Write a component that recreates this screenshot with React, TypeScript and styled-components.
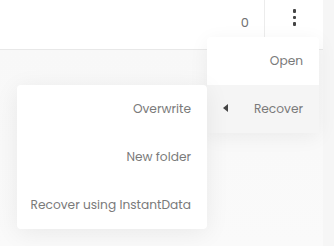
import styled, { createGlobalStyle } from "styled-components";

const GlobalStyle = createGlobalStyle`
    html, body, #root {
        height: 100%;
        margin: 0;
    }
    body {
        font-family: "Poppins", "Open Sans", "Noto Sans", sans-serif;
        background: #fafafa;
    }
`;

type MenuItemProps = {
    label: string;
    active?: boolean;
    hasSubmenu?: boolean;
    children?: React.ReactNode;
};

function MenuItem(props: MenuItemProps) {
    const { label, active, hasSubmenu, children } = props;
    return (
        <Item $active={active}>
            {hasSubmenu && <Caret />}
            <ItemLabel>{label}</ItemLabel>
            {children}
        </Item>
    );
}

function App() {
    return (
        <Page>
            <GlobalStyle />
            <Main>
                <TopBar>
                    <Spacer />
                    <CountCell>0</CountCell>
                    <ActionCell>
                        <Kebab>
                            <Dot />
                            <Dot />
                            <Dot />
                        </Kebab>
                        <Menu>
                            <MenuItem label="Open" />
                            <MenuItem label="Recover" active hasSubmenu>
                                <SubMenu>
                                    <MenuItem label="Overwrite" />
                                    <MenuItem label="New folder" />
                                    <MenuItem label="Recover using InstantData" />
                                </SubMenu>
                            </MenuItem>
                        </Menu>
                    </ActionCell>
                </TopBar>
                <Body />
            </Main>
            <Gutter />
        </Page>
    );
}

const Page = styled.div`
    display: flex;
    height: 100%;
`;

const Main = styled.div`
    flex: 1;
    display: flex;
    flex-direction: column;
`;

const Gutter = styled.div`
    width: 11px;
    background: #f6f6f6;
`;

const TopBar = styled.div`
    display: flex;
    height: 49px;
    background: #ffffff;
    border-bottom: 1px solid #e8e8e8;
`;

const Spacer = styled.div`
    flex: 1;
`;

const CountCell = styled.div`
    width: 44px;
    padding-right: 15px;
    display: flex;
    align-items: center;
    justify-content: flex-end;
    box-sizing: border-box;
    font-size: 13px;
    color: #707070;
    border-right: 1px solid #ececec;
    padding-bottom: 4px;
`;

const ActionCell = styled.div`
    position: relative;
    width: 58px;
    display: flex;
    justify-content: center;
    padding-top: 9px;
    box-sizing: border-box;
`;

const Kebab = styled.div`
    display: flex;
    flex-direction: column;
    gap: 3px;
    height: max-content;
    margin-left: 1px;
`;

const Dot = styled.span`
    width: 3.5px;
    height: 3.5px;
    border-radius: 1px;
    background: #444;
`;

const Body = styled.div`
    flex: 1;
    background: linear-gradient(180deg, #f8f8f8 0%, #fafafa 100%);
`;

const Menu = styled.ul`
    position: absolute;
    top: 37px;
    right: 4px;
    width: 112px;
    margin: 0;
    padding: 0;
    list-style: none;
    background: #ffffff;
    border-radius: 4px;
    box-shadow: 0 4px 20px rgba(0, 0, 0, 0.06);
    z-index: 2;
`;

const SubMenu = styled.ul`
    position: absolute;
    top: 0;
    right: 100%;
    width: 190px;
    margin: 0;
    padding: 0;
    list-style: none;
    background: #ffffff;
    border-radius: 4px;
    box-shadow: 0 4px 24px rgba(0, 0, 0, 0.07);
`;

const Item = styled.li<{ $active?: boolean }>`
    position: relative;
    height: 48px;
    display: flex;
    align-items: center;
    justify-content: flex-end;
    padding: 0 16px;
    font-size: 12.2px;
    color: #7a7a7a;
    background: ${(p) => (p.$active ? "#f5f5f5" : "transparent")};
`;

const ItemLabel = styled.span`
    white-space: nowrap;
`;

const Caret = styled.span`
    position: absolute;
    left: 16px;
    top: 19px;
    width: 0;
    height: 0;
    border-top: 4px solid transparent;
    border-bottom: 4px solid transparent;
    border-right: 5px solid #444;
`;

export default App;
